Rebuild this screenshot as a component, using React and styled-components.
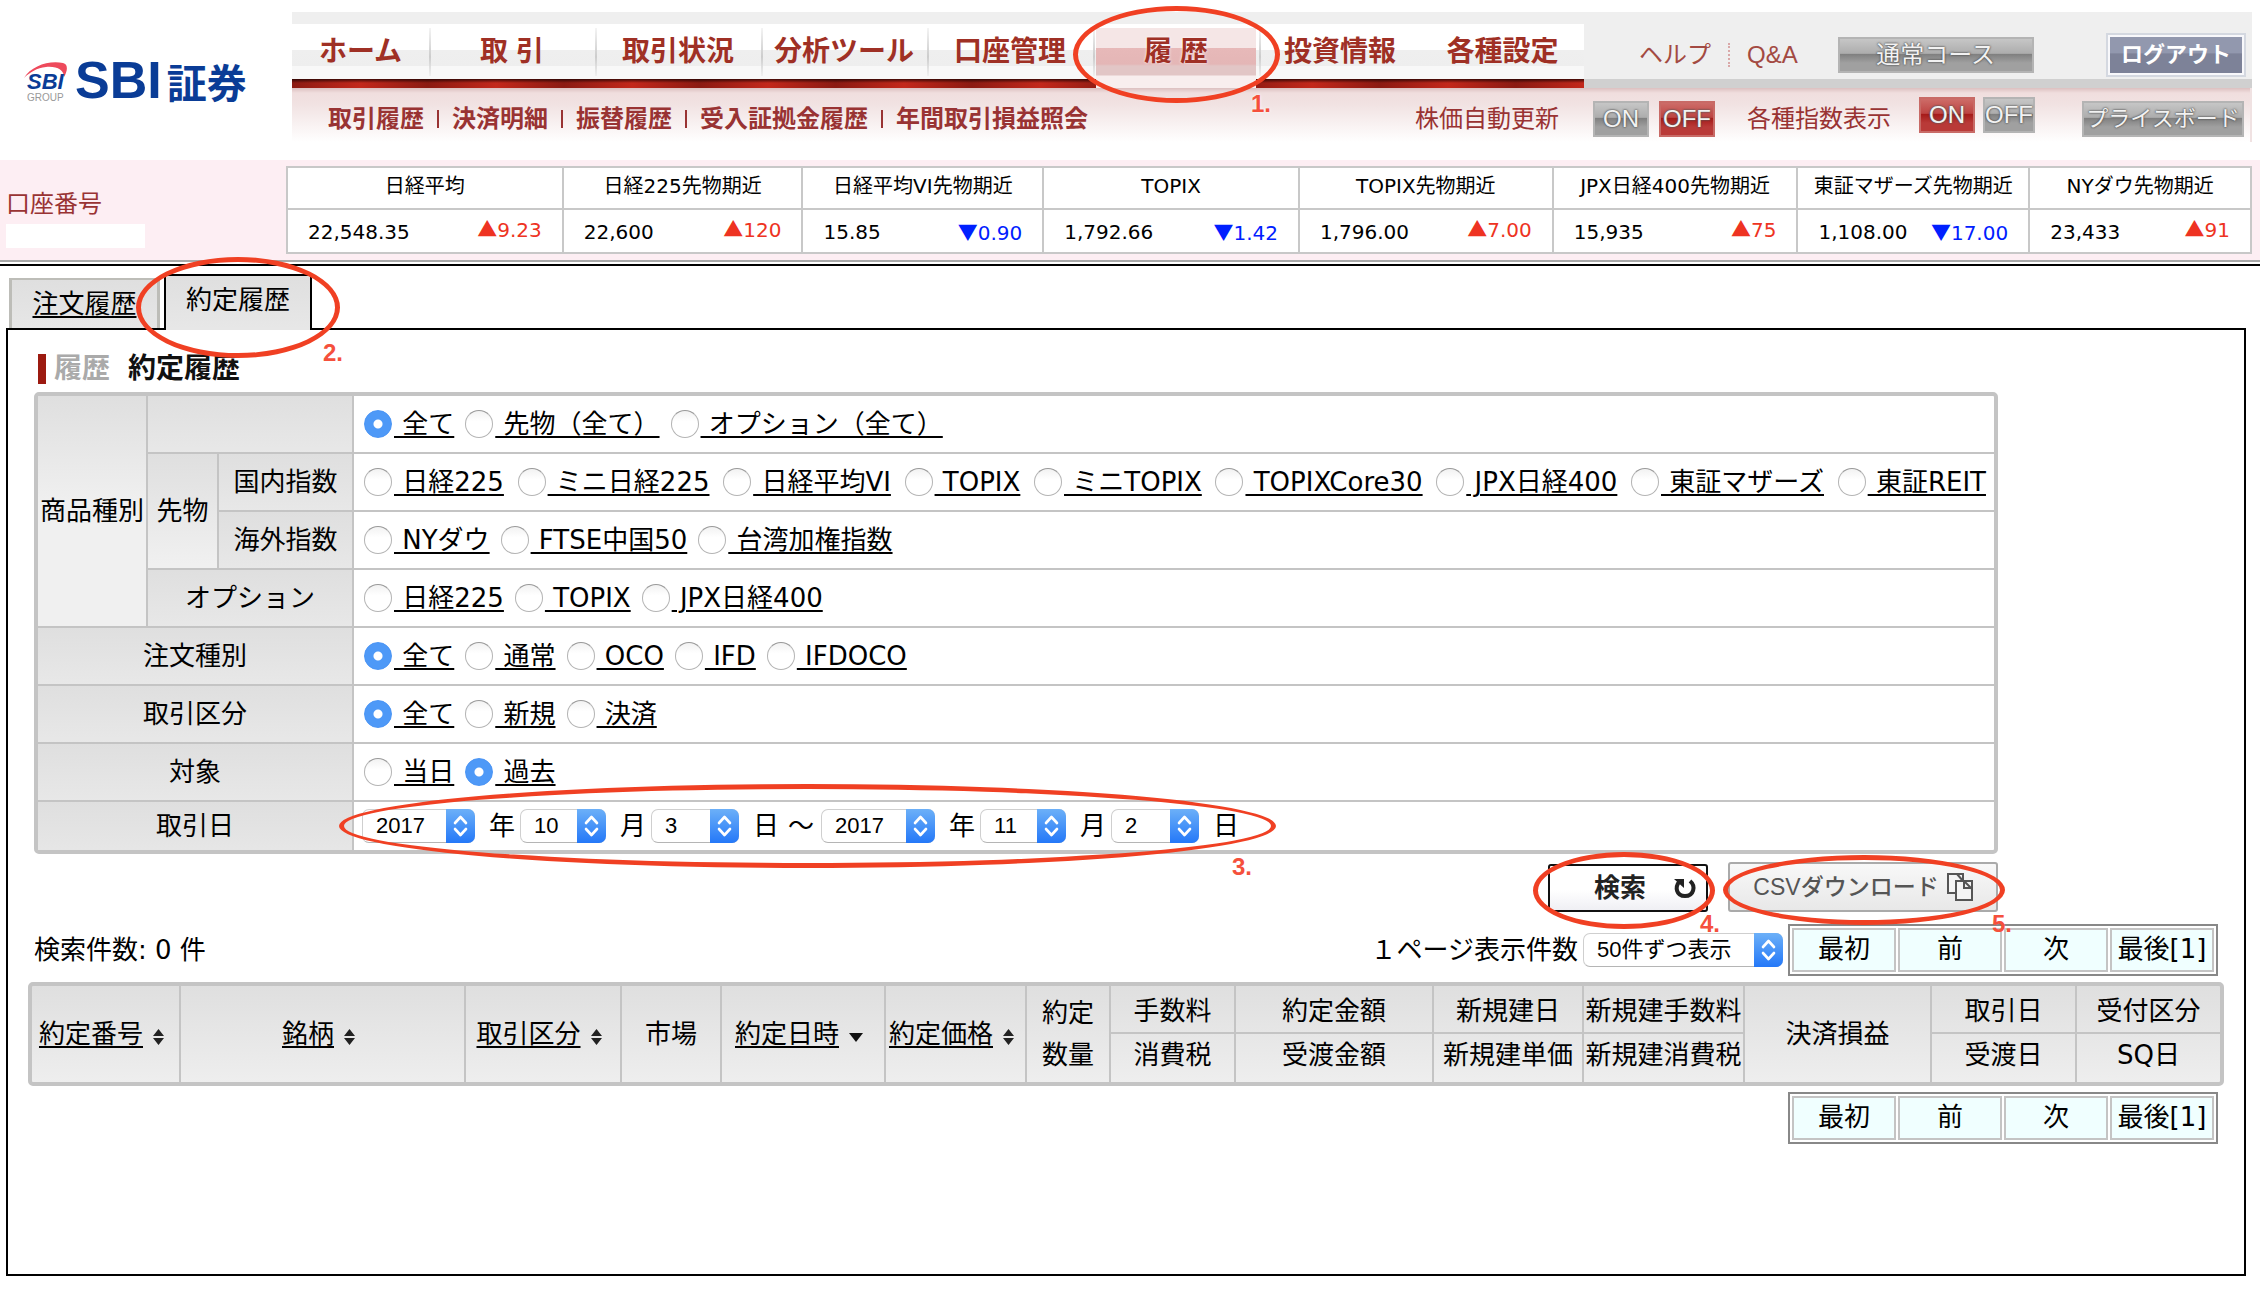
import React, { useId } from "react";
import styled, { createGlobalStyle, css } from "styled-components";

const sans = `"DejaVu Sans", "Noto Sans CJK JP", sans-serif`;
const gothic = `"Liberation Sans", "Noto Sans CJK JP", sans-serif`;
const line = "#c4c4c4";
const wine = "#993333";
const mark = "#f04023";

const Global = createGlobalStyle`
  *, *::before, *::after { box-sizing: border-box; }
  body { margin: 0; background: #fff; color: #000; font: 26px/32px ${sans}; }
  button, select, input { font: inherit; color: inherit; margin: 0; }
  button { cursor: pointer; padding: 0; }
  a { color: inherit; text-decoration: none; }
  table { border-spacing: 0; border-collapse: separate; }
  th, td { padding: 0; font-weight: 400; }
`;

const Page = styled.div`
  display: flex;
  flex-direction: column;
  min-height: 100vh;
`;

/* ---------- hand-drawn markers ---------- */
const Marked = styled.div`
  position: relative;
  display: flex;
`;
const Ring = styled.span`
  position: absolute;
  z-index: 3;
  inset: ${(p) => p.$inset};
  border: 5px solid ${mark};
  border-radius: 50%;
  pointer-events: none;
`;
const Step = styled.span`
  position: absolute;
  z-index: 3;
  right: ${(p) => p.$right}px;
  bottom: ${(p) => p.$bottom}px;
  font: 700 24px/24px ${gothic};
  color: #f5503c;
  pointer-events: none;
`;

/* ---------- header ---------- */
const Header = styled.header`
  display: flex;
  padding: 12px 8px 18px 0;
`;
const Brand = styled.a`
  flex: none;
  width: 292px;
  height: 90px;
  margin-top: 25px;
  padding-left: 22px;
  display: flex;
  align-items: center;
  align-self: flex-start;
  color: #0a3c96;
`;
const BrandName = styled.span`
  margin-left: 5px;
  display: flex;
  align-items: baseline;
  gap: 5px;
  font: 700 52px/52px ${gothic};
`;
const BrandKanji = styled.span`
  font-size: 40px;
`;
const HeaderMain = styled.div`
  flex: 1;
  min-width: 0;
`;
const HeaderTop = styled.div`
  display: flex;
  padding-top: 12px;
  background: #efefef;
`;
const Nav = styled.nav`
  display: flex;
  height: 64px;
  background:
    linear-gradient(rgba(20, 0, 0, 0.75), rgba(20, 0, 0, 0) 4px) 0 55px / 100% 9px no-repeat,
    repeating-linear-gradient(90deg, #8b1a12 0, #c3281b 68px, #8b1a12 136px) 0 55px / 100% 9px no-repeat,
    linear-gradient(#fff 26px, #efefef 26px, #eee 42px, #f8f8f8 42px);
`;
const NavItem = styled.a`
  position: relative;
  display: flex;
  justify-content: center;
  width: ${(p) => p.$w}px;
  padding-top: 12px;
  font: 700 28px/32px ${gothic};
  color: #9f3025;
  white-space: pre;
  &::before {
    content: "";
    position: absolute;
    left: 0;
    top: 4px;
    width: 2px;
    height: 48px;
    background: ${(p) => (p.$divided ? "linear-gradient(#f4f4f4, #ccc 60%, #f0f0f0)" : "none")};
  }
  ${(p) =>
    p.$current &&
    css`
      background: linear-gradient(#f5e6e6 20px, #e7b9b9 20px, #e4b6b6 36px, #e2c6c6 38px, #e2c6c6 47px, #f8eeee 48px);
      background-size: 160px 60px;
      background-position: 3px 4px;
      background-repeat: no-repeat;
      text-shadow: 0 0 3px #fff;
    `}
`;
const Utility = styled.div`
  flex: 1;
  display: flex;
  align-items: center;
  padding: 6px 6px 0 55px;
  border-bottom: 9px solid #d0d0d0;
  font: 24px/30px ${gothic};
  color: #a34a42;
`;
const Dots = styled.span`
  width: 0;
  height: 24px;
  margin: 0 17px;
  border-left: 2px dotted #d9a8a8;
`;
const gloss = {
  gray: ["#c6c6c6", "#adadad", "#7f7f7f", "#a0a0a0", "#b4b4b4"],
  red: ["#cd6c68", "#bd4442", "#a51a18", "#b93a38", "#c86a66"],
};
const GlossButton = styled.button`
  width: ${(p) => p.$w}px;
  height: 36px;
  border: 2px solid ${(p) => gloss[p.$tone][4]};
  background: linear-gradient(
    ${(p) => `${gloss[p.$tone][0]}, ${gloss[p.$tone][1]} 45%, ${gloss[p.$tone][2]} 47%, ${gloss[p.$tone][3]} 75%`}
  );
  font: ${(p) => p.$size || 24}px/28px ${gothic};
  color: #f2f2f2;
  text-shadow: 0 0 2px #555, 0 0 2px #555;
  white-space: nowrap;
`;
const CourseButton = styled(GlossButton)`
  margin-left: 40px;
`;
const LogoutButton = styled.button`
  width: 140px;
  height: 44px;
  margin-left: auto;
  border: 2px solid #d4d8e0;
  outline: 2px solid #f8f8fb;
  outline-offset: -4px;
  background: linear-gradient(#9298ae 45%, #7d8298 47%);
  font: 700 22px/30px ${gothic};
  color: #fff;
`;
const SubBar = styled.div`
  display: flex;
  align-items: center;
  height: 54px;
  padding: 8px 6px 0 36px;
  border-right: 2px solid #f0e2e2;
  background: linear-gradient(#dcc0c0, #f0dede 5px, #f1e2e2 16px, #fff);
  font: 24px/30px ${gothic};
  color: ${wine};
`;
const SubNav = styled.nav`
  display: flex;
  font-weight: 700;
`;
const SubLink = styled.a`
  display: flex;
  align-items: center;
  & + &::before {
    content: "";
    width: 2px;
    height: 18px;
    margin: 0 13px;
    background: ${wine};
  }
`;
const SubTools = styled.div`
  display: flex;
  align-items: center;
  margin-left: auto;
`;
const Toggle = styled.div`
  display: flex;
  gap: ${(p) => (p.$raised ? 8 : 10)}px;
  margin: 0 32px 0 34px;
  ${(p) => p.$raised && "margin: 0 47px 0 28px; padding-bottom: 8px;"}
`;

/* ---------- index strip ---------- */
const Band = styled.section`
  display: flex;
  padding: 6px 8px;
  background: #fdeef3;
  border-bottom: 2px solid #a8a8a8;
`;
const Account = styled.div`
  flex: none;
  width: 278px;
  margin-left: -2px;
  padding-top: 22px;
  font: 24px/32px ${gothic};
  color: ${wine};
`;
const AccountNo = styled.div`
  width: 139px;
  height: 24px;
  margin-top: 4px;
  background: #fff;
`;
const Indices = styled.table`
  flex: 1;
  width: 100%;
  margin-left: 2px;
  table-layout: fixed;
  background: #fff;
  border: 2px solid #c8c8c8;
  font-size: 20px;
  line-height: 24px;
  th, td { border-right: 2px solid #c8c8c8; }
  th:last-child, td:last-child { border-right: 0; }
  th { height: 42px; padding-bottom: 4px; border-bottom: 2px solid #c8c8c8; white-space: nowrap; }
  td { height: 42px; }
`;
const Quote = styled.div`
  display: flex;
  justify-content: space-between;
  padding: 2px 20px 0 20px;
`;
const Change = styled.span`
  margin-top: ${(p) => (p.$down ? 0 : -3)}px;
  color: ${(p) => (p.$down ? "#0020ff" : "#ee3322")};
`;
const Arrow = styled.span`
  font-family: "Noto Sans CJK JP", sans-serif;
`;

/* ---------- tabs and panel ---------- */
const shade = css`
  background: #f0f0f0 linear-gradient(#dfdfdf, #e2e2e2 20px, #f0f0f0) 0 0 / 100% 110px no-repeat;
`;
const Body = styled.main`
  flex: 1;
  display: flex;
  flex-direction: column;
  margin-top: 2px;
  padding: 8px 14px 14px 6px;
  border-top: 2px solid #000;
`;
const Tabs = styled.div`
  display: flex;
  align-items: flex-end;
  padding-left: 3px;
  margin-bottom: -2px;
`;
const Tab = styled.a`
  ${shade}
  height: 50px;
  width: 151px;
  margin: 0 4px 2px 0;
  padding-top: 8px;
  border: solid #bdbdb8;
  border-width: 2px 3px 0;
  text-align: center;
  text-decoration: underline;
  text-decoration-thickness: 2px;
  text-underline-offset: 3px;
  ${(p) =>
    p.$current &&
    css`
      position: relative;
      z-index: 1;
      height: 56px;
      width: 148px;
      margin: 0;
      border: 2px solid #000;
      border-bottom: 0;
      text-decoration: none;
    `}
`;
const Panel = styled.section`
  flex: 1;
  border: 2px solid #000;
  padding: 24px 20px;
`;
const Title = styled.h1`
  display: flex;
  align-items: center;
  margin: 0 0 8px 10px;
  padding-left: 8px;
  border-left: 8px solid #9c1a10;
  font: 700 28px/30px ${gothic};
  color: #111;
`;
const TitleParent = styled.span`
  margin-right: 18px;
  color: #aaa;
`;

/* ---------- search form ---------- */
const Search = styled.form`
  width: 1964px;
  max-width: 100%;
  margin-left: 6px;
`;
const Sheet = styled.table`
  width: 100%;
  border: 4px solid ${line};
  border-radius: 5px;
`;
const HeadCell = styled.th`
  ${shade}
  width: ${(p) => p.$w || "auto"};
  height: ${(p) => (p.$last ? 48 : 58)}px;
  border-right: 2px solid ${line};
  border-bottom: ${(p) => (p.$last ? 0 : 2)}px solid ${line};
  white-space: nowrap;
`;
const BodyCell = styled.td`
  height: ${(p) => (p.$last ? 48 : 58)}px;
  border-bottom: ${(p) => (p.$last ? 0 : 2)}px solid ${line};
`;
const OptionRow = styled.div`
  display: flex;
  gap: ${(p) => (p.$spread ? 0 : 11)}px;
  padding: 0 8px 0 10px;
  justify-content: ${(p) => (p.$spread ? "space-between" : "flex-start")};
`;
const Option = styled.label`
  display: flex;
  align-items: center;
  gap: 2px;
  white-space: nowrap;
`;
const OptionText = styled.span`
  white-space: pre;
  text-decoration: underline;
  text-decoration-thickness: 2px;
  text-underline-offset: 3px;
`;
const Radio = styled.input`
  appearance: none;
  width: 28px;
  height: 28px;
  border: 1px solid #b4b4b4;
  border-top-color: #999;
  border-radius: 50%;
  background: linear-gradient(#f2f2f2, #fff 40%);
  &:checked {
    border-color: #4a94f5;
    background: radial-gradient(circle, #fff 4px, #4e99f7 5px);
  }
`;
const DateRow = styled.div`
  display: flex;
  align-items: center;
  padding-left: 3px;
  white-space: pre;
`;
const Tilde = styled.span`
  margin: 0 2px 0 9px;
`;
const Picker = styled.span`
  position: relative;
  display: inline-flex;
  margin: 0 ${(p) => p.$after}px 0 5px;
`;
const PickerSelect = styled.select`
  appearance: none;
  width: ${(p) => p.$w}px;
  height: 34px;
  padding: 0 32px 0 13px;
  border: 1px solid #cfcfcf;
  border-bottom-color: #b5b5b5;
  border-radius: 7px;
  background: #fff;
  font: 22px/30px ${gothic};
`;
const PickerKnob = styled.svg`
  position: absolute;
  top: 0;
  right: 0;
  width: 29px;
  height: 34px;
  border-radius: 0 7px 7px 0;
  background: linear-gradient(#6cb0f8, #2478f8);
  pointer-events: none;
`;
const Actions = styled.div`
  display: flex;
  justify-content: flex-end;
  align-items: flex-end;
  gap: 20px;
  padding-top: 8px;
`;
const SearchButton = styled.button`
  display: flex;
  align-items: center;
  width: 160px;
  height: 48px;
  padding-left: 44px;
  gap: 27px;
  border: 2px solid #111;
  border-radius: 3px;
  background: linear-gradient(#fff 55%, #efeff4);
  font: 700 26px/32px ${gothic};
  color: #222;
`;
const CsvButton = styled.button`
  display: flex;
  align-items: center;
  justify-content: center;
  gap: 8px;
  width: 270px;
  height: 50px;
  border: 2px solid #aaa;
  border-radius: 3px;
  background: linear-gradient(#f8f8f8, #e8e8e8);
  font: 500 23px/32px ${gothic};
  color: #555;
`;

/* ---------- results ---------- */
const ListBar = styled.div`
  display: flex;
  align-items: center;
  margin-top: 12px;
  padding: 0 6px;
`;
const PageSize = styled.label`
  display: flex;
  align-items: center;
  margin-left: auto;
`;
const Pager = styled.nav`
  display: flex;
  gap: 2px;
  width: 430px;
  padding: 2px;
  border: 2px solid #888;
`;
const PagerLink = styled.a`
  flex: 1;
  height: 44px;
  border: 2px solid ${line};
  background: #f0ffff;
  text-align: center;
  line-height: 38px;
  white-space: nowrap;
`;
const Results = styled.table`
  ${shade}
  width: 100%;
  margin: 6px 0;
  table-layout: fixed;
  border: 4px solid ${line};
  border-radius: 5px;
  line-height: 42px;
`;
const ColHead = styled.th`
  height: 48px;
  border-right: ${(p) => (p.$end ? 0 : 2)}px solid ${line};
  border-bottom: ${(p) => (p.$upper ? 2 : 0)}px solid ${line};
  padding: ${(p) => (p.$upper ? "4px 0 0" : p.$lower ? "0 0 6px" : 0)};
  line-height: ${(p) => (p.$upper || p.$lower ? 32 : 42)}px;
  white-space: nowrap;
`;
const SortLink = styled.a`
  text-decoration: underline;
  text-decoration-thickness: 2px;
  text-underline-offset: 3px;
`;
const SortIcon = styled.svg`
  width: ${(p) => p.$w}px;
  height: 16px;
  margin: 0 8px 0 10px;
  vertical-align: -2px;
`;
const PagerRow = styled.div`
  display: flex;
  justify-content: flex-end;
  padding: 0 6px;
`;

const navItems = [
  ["ホーム", 137], ["取 引", 166], ["取引状況", 166], ["分析ツール", 166],
  ["口座管理", 166], ["履 歴", 166], ["投資情報", 162], ["各種設定", 163],
];
const subLinks = ["取引履歴", "決済明細", "振替履歴", "受入証拠金履歴", "年間取引損益照会"];
const indices = [
  ["日経平均", "22,548.35", "9.23", false, 276],
  ["日経225先物期近", "22,600", "120", false, 240],
  ["日経平均VI先物期近", "15.85", "0.90", true, 241],
  ["TOPIX", "1,792.66", "1.42", true, 256],
  ["TOPIX先物期近", "1,796.00", "7.00", false, 254],
  ["JPX日経400先物期近", "15,935", "75", false, 245],
  ["東証マザーズ先物期近", "1,108.00", "17.00", true, 232],
  ["NYダウ先物期近", "23,433", "91", false, 220],
];
const columns = [
  { w: 149, top: "約定番号", sort: "both" },
  { w: 285, top: "銘柄", sort: "both" },
  { w: 156, top: "取引区分", sort: "both" },
  { w: 100, top: "市場" },
  { w: 164, top: "約定日時", sort: "down" },
  { w: 141, top: "約定価格", sort: "both" },
  { w: 84, top: "約定", wrap: "数量" },
  { w: 125, top: "手数料", low: "消費税" },
  { w: 198, top: "約定金額", low: "受渡金額" },
  { w: 150, top: "新規建日", low: "新規建単価" },
  { w: 161, top: "新規建手数料", low: "新規建消費税" },
  { w: 187, top: "決済損益" },
  { w: 145, top: "取引日", low: "受渡日" },
  { w: 143, top: "受付区分", low: "SQ日" },
];
const total = (widths) => widths.reduce((sum, w) => sum + w, 0);

function Cols({ widths }) {
  const sum = total(widths);
  return (
    <colgroup>
      {widths.map((w, i) => <col key={i} style={{ width: `${(w / sum) * 100}%` }} />)}
    </colgroup>
  );
}

function Options({ name, items, value, spread }) {
  return (
    <OptionRow $spread={spread}>
      {items.map((text) => (
        <Option key={text}>
          <Radio type="radio" name={name} defaultChecked={text === value} />
          <OptionText>{"\u00a0" + text}</OptionText>
        </Option>
      ))}
    </OptionRow>
  );
}

function Dropdown({ id, label, value, width, after = 14 }) {
  return (
    <Picker $after={after}>
      <PickerSelect id={id} aria-label={label} $w={width} defaultValue={value}>
        <option>{value}</option>
      </PickerSelect>
      <PickerKnob viewBox="0 0 29 34" fill="none" stroke="#fff" strokeWidth="2.6" strokeLinecap="round" strokeLinejoin="round">
        <path d="M9 14 L14.5 8 L20 14 M9 20 L14.5 26 L20 20" />
      </PickerKnob>
    </Picker>
  );
}

function Sort({ kind }) {
  return kind === "down" ? (
    <SortIcon $w={14} viewBox="0 0 14 16"><path d="M0 4h14l-7 9z" fill="#111" /></SortIcon>
  ) : (
    <SortIcon $w={11} viewBox="0 0 11 16"><path d="M0 7L5.500 0 11 7zM0 9h11L5.500 16z" fill="#222" /></SortIcon>
  );
}

function Pages() {
  return (
    <Pager>
      {["最初", "前", "次", "最後[1]"].map((t) => <PagerLink key={t} href="#">{t}</PagerLink>)}
    </Pager>
  );
}

export default function App() {
  const sizeId = useId();
  return (
    <Page>
      <Global />
      <Header>
        <Brand href="#">
          <svg width="48" height="42" viewBox="0 0 48 42">
            <path d="M2 17C9 5 27-1 41 2c5 1 5 7 1 14C42 9 35 5 24 6 15 7 8 11 2 17z" fill="#ee4a5c" />
            <text x="5" y="28" fontFamily="Liberation Sans" fontSize="22" fontWeight="700" fontStyle="italic" fill="#0a3c96">SBI</text>
            <text x="5" y="40" fontFamily="Liberation Sans" fontSize="10" fill="#999">GROUP</text>
          </svg>
          <BrandName>SBI<BrandKanji>証券</BrandKanji></BrandName>
        </Brand>
        <HeaderMain>
          <HeaderTop>
            <Nav>
              {navItems.map(([text, w], i) => (
                <NavItem key={text} href="#" $w={w} $divided={i > 0 && i < 7} $current={i === 5}>
                  {text}
                  {i === 5 && <><Ring $inset="-18px -21px -15px -20px" /><Step $right={-12} $bottom={-28}>1.</Step></>}
                </NavItem>
              ))}
            </Nav>
            <Utility>
              <a href="#">ヘルプ</a>
              <Dots />
              <a href="#">Q&amp;A</a>
              <CourseButton $w={196} $tone="gray">通常コース</CourseButton>
              <LogoutButton>ログアウト</LogoutButton>
            </Utility>
          </HeaderTop>
          <SubBar>
            <SubNav>
              {subLinks.map((t) => <SubLink key={t} href="#">{t}</SubLink>)}
            </SubNav>
            <SubTools>
              <span>株価自動更新</span>
              <Toggle>
                <GlossButton $w={56} $tone="gray">ON</GlossButton>
                <GlossButton $w={56} $tone="red">OFF</GlossButton>
              </Toggle>
              <span>各種指数表示</span>
              <Toggle $raised>
                <GlossButton $w={56} $tone="red">ON</GlossButton>
                <GlossButton $w={52} $tone="gray">OFF</GlossButton>
              </Toggle>
              <GlossButton $w={162} $size={22} $tone="gray">プライスボード</GlossButton>
            </SubTools>
          </SubBar>
        </HeaderMain>
      </Header>

      <Band>
        <Account>
          口座番号
          <AccountNo />
        </Account>
        <Indices>
          <Cols widths={indices.map((r) => r[4])} />
          <thead><tr>{indices.map((r) => <th key={r[0]}>{r[0]}</th>)}</tr></thead>
          <tbody>
            <tr>
              {indices.map(([name, value, diff, down]) => (
                <td key={name}>
                  <Quote>
                    <span>{value}</span>
                    <Change $down={down}><Arrow>{down ? "▼" : "▲"}</Arrow>{diff}</Change>
                  </Quote>
                </td>
              ))}
            </tr>
          </tbody>
        </Indices>
      </Band>

      <Body>
        <Tabs>
          <Tab href="#">注文履歴</Tab>
          <Marked>
            <Tab href="#" $current>約定履歴</Tab>
            <Ring $inset="-17px -28px -28px -28px" />
            <Step $right={-31} $bottom={-35}>2.</Step>
          </Marked>
        </Tabs>
        <Panel>
          <Title><TitleParent>履歴</TitleParent>約定履歴</Title>
          <Search onSubmit={(e) => e.preventDefault()}>
            <Sheet>
              <tbody>
                <tr>
                  <HeadCell rowSpan={4} $w="110px">商品種別</HeadCell>
                  <HeadCell colSpan={2} />
                  <BodyCell><Options name="product" value="全て" items={["全て", "先物（全て）", "オプション（全て）"]} /></BodyCell>
                </tr>
                <tr>
                  <HeadCell rowSpan={2} $w="71px">先物</HeadCell>
                  <HeadCell $w="135px">国内指数</HeadCell>
                  <BodyCell>
                    <Options name="product" spread items={["日経225", "ミニ日経225", "日経平均VI", "TOPIX", "ミニTOPIX", "TOPIXCore30", "JPX日経400", "東証マザーズ", "東証REIT"]} />
                  </BodyCell>
                </tr>
                <tr>
                  <HeadCell>海外指数</HeadCell>
                  <BodyCell><Options name="product" items={["NYダウ", "FTSE中国50", "台湾加権指数"]} /></BodyCell>
                </tr>
                <tr>
                  <HeadCell colSpan={2}>オプション</HeadCell>
                  <BodyCell><Options name="product" items={["日経225", "TOPIX", "JPX日経400"]} /></BodyCell>
                </tr>
                <tr>
                  <HeadCell colSpan={3}>注文種別</HeadCell>
                  <BodyCell><Options name="order" value="全て" items={["全て", "通常", "OCO", "IFD", "IFDOCO"]} /></BodyCell>
                </tr>
                <tr>
                  <HeadCell colSpan={3}>取引区分</HeadCell>
                  <BodyCell><Options name="trade" value="全て" items={["全て", "新規", "決済"]} /></BodyCell>
                </tr>
                <tr>
                  <HeadCell colSpan={3}>対象</HeadCell>
                  <BodyCell><Options name="target" value="過去" items={["当日", "過去"]} /></BodyCell>
                </tr>
                <tr>
                  <HeadCell colSpan={3} $last>取引日</HeadCell>
                  <BodyCell $last>
                    <Marked>
                      <DateRow>
                        <Dropdown label="開始年" value="2017" width={113} />年
                        <Dropdown label="開始月" value="10" width={86} />月
                        <Dropdown label="開始日" value="3" width={88} />日<Tilde>〜</Tilde>
                        <Dropdown label="終了年" value="2017" width={114} />年
                        <Dropdown label="終了月" value="11" width={86} />月
                        <Dropdown label="終了日" value="2" width={88} />日
                      </DateRow>
                      <Ring $inset="-25px 718px -25px -15px" />
                      <Step $right={742} $bottom={-36}>3.</Step>
                    </Marked>
                  </BodyCell>
                </tr>
              </tbody>
            </Sheet>
            <Actions>
              <Marked>
                <SearchButton type="submit">
                  検索
                  <svg width="24" height="24" viewBox="0 0 24 24" fill="none" stroke="#222" strokeWidth="4">
                    <path d="M6 6C2 11 3 20 12 20s11-10 5-15" />
                    <path d="M1 3h10v9z" fill="#222" stroke="none" />
                  </svg>
                </SearchButton>
                <Ring $inset="-12px -7px -17px -15px" />
                <Step $right={-12} $bottom={-24}>4.</Step>
              </Marked>
              <Marked>
                <CsvButton type="button">
                  CSVダウンロード
                  <svg width="26" height="28" viewBox="0 0 26 28" fill="#f4f4f4" stroke="#555" strokeWidth="2">
                    <path d="M1 1h15v19H1zM10 1l6 7" />
                    <path d="M9 8h16v19H9zM17 8l8 8M17 8v7h8" />
                  </svg>
                </CsvButton>
                <Ring $inset="-7px -7px -13px -5px" />
                <Step $right={-14} $bottom={-24}>5.</Step>
              </Marked>
            </Actions>
          </Search>

          <ListBar>
            <span>検索件数: 0 件</span>
            <PageSize htmlFor={sizeId}>１ページ表示件数</PageSize>
            <Dropdown id={sizeId} value="50件ずつ表示" width={200} after={5} />
            <Pages />
          </ListBar>
          <Results>
            <Cols widths={columns.map((c) => c.w)} />
            <thead>
              <tr>
                {columns.map((c, i) => (
                  <ColHead key={c.top} rowSpan={c.low ? 1 : 2} $upper={!!c.low} $end={i === columns.length - 1}>
                    {c.sort ? <><SortLink href="#">{c.top}</SortLink><Sort kind={c.sort} /></> : c.top}
                    {c.wrap && <><br />{c.wrap}</>}
                  </ColHead>
                ))}
              </tr>
              <tr>
                {columns.filter((c) => c.low).map((c) => (
                  <ColHead key={c.low} $lower $end={c.low === "SQ日"}>{c.low}</ColHead>
                ))}
              </tr>
            </thead>
          </Results>
          <PagerRow><Pages /></PagerRow>
        </Panel>
      </Body>
    </Page>
  );
}
